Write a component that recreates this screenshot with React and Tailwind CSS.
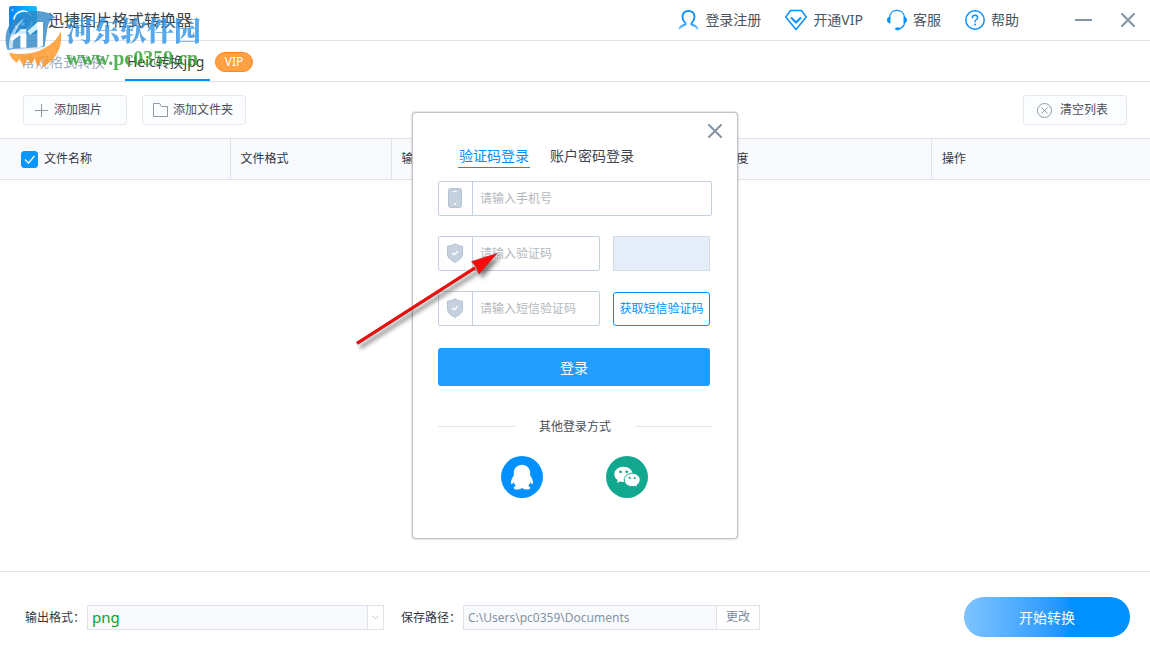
// App.jsx
import React, { useState } from 'react';

// --- Icons ---

const UserIcon = () => (
    <svg width="21" height="22" viewBox="0 0 22 22" fill="none" stroke="url(#userFade)" strokeWidth="2" strokeLinecap="round">
        <defs>
            <linearGradient id="userFade" x1="0" y1="0" x2="0" y2="22" gradientUnits="userSpaceOnUse">
                <stop offset="0.6" stopColor="#0a91ff" />
                <stop offset="1" stopColor="#9fd3ff" />
            </linearGradient>
        </defs>
        <path d="M1.5 20c1-2.2 3.2-3.2 5.8-4C8.3 15.6 8.3 14.8 7.5 14 5.5 12 4.7 10.2 4.7 7.5 4.7 4 7.3 1.5 11 1.5s6.3 2.5 6.3 6c0 2.7-.8 4.5-2.8 6.5-.8.8-.8 1.600.2 2 2.600.8 4.800 1.800 5.800 4" />
    </svg>
);

const DiamondIcon = () => (
    <svg width="22" height="22" viewBox="0 0 22 22" fill="none" stroke="#0a91ff" strokeLinejoin="round" strokeLinecap="round">
        <path strokeWidth="1.5" d="M5.5 1.5h11L21.2 8 11 20.5.8 8z" />
        <path strokeWidth="2" d="M6.5 9 11 13.500 15.500 9" />
    </svg>
);

const HeadsetIcon = () => (
    <svg width="20" height="22" viewBox="0 0 20 22" fill="none" stroke="#0a91ff" strokeLinecap="round">
        <path strokeWidth="1.2" d="M2.5 8C3 4 6 1.300 10 1.300S17 4 17.500 8M17.500 14.500c-.7 2.700-2.500 4.500-5.500 5.300" />
        <path fill="#0a91ff" stroke="none" d="M3.500 7.500v7C1.500 14.500 0 13 0 11s1.500-3.500 3.500-3.500zM16.500 7.500v7c2 0 3.500-1.500 3.500-3.500s-1.500-3.500-3.500-3.500z" />
        <ellipse cx="10.5" cy="19.800" rx="2.500" ry="1.500" fill="#0a91ff" stroke="none" />
    </svg>
);

const HelpIcon = () => (
    <svg width="20" height="20" viewBox="0 0 20 20" fill="none" stroke="#0a91ff" strokeWidth="1.5" strokeLinecap="round">
        <circle cx="10" cy="10" r="9.2" />
        <path d="M7.300 7.800C7.300 6.200 8.400 5.200 10 5.200s2.700 1 2.700 2.400C12.700 9.500 10 9.600 10 11.800" />
        <circle cx="10" cy="14.6" r="0.4" />
    </svg>
);

const CloseIcon = () => (
    <svg width="14" height="14" viewBox="0 0 14 14" stroke="#8494a3" strokeWidth="2" strokeLinecap="round">
        <path d="M1 1l12 12M13 1L1 13" />
    </svg>
);

const PhoneIcon = () => (
    <svg width="14" height="20" viewBox="0 0 14 20">
        <rect x="0.5" y="0.5" width="13" height="19" rx="2" fill="#c5d1df" stroke="#b3c2d2" />
        <path d="M5 3.5h4" stroke="#fff" />
        <circle cx="7" cy="16" r="1.1" fill="#fff" />
    </svg>
);

const ShieldIcon = () => (
    <svg width="16" height="20" viewBox="0 0 16 20" fill="none">
        <path d="M8 .7c2.300 1.500 4.800 2.300 7.500 2.500v8c0 3.500-3.200 6-7.500 8.200C3.700 17.200.5 14.700.5 11.200v-8C3.200 3 5.700 2.200 8 .7z" fill="#c5d1df" stroke="#b3c2d2" />
        <path d="M5.300 9.800l2 2 3.500-3.500" stroke="#fff" strokeWidth="1.3" />
    </svg>
);

const QQIcon = () => (
    <svg width="42" height="42" viewBox="0 0 42 42">
        <circle cx="21" cy="21" r="21" fill="#0090ff" />
        <path fill="#fff" d="M21 8.800c-5 0-8.200 3.600-8.200 8.200v2.500c-1.600 2.200-2.800 4.800-2.800 7 0 1.600.6 2 1.200 1.500l1.600-1.800c.3 1.500 1 2.800 2 3.900-1.300.5-2 1.100-2 1.800 0 1.200 2 1.700 4 1.600 1.800 0 3.200-.6 4.200-1.400 1 .8 2.400 1.400 4.200 1.400 2 .1 4-.4 4-1.600 0-.7-.7-1.300-2-1.800 1-1.100 1.700-2.400 2-3.900l1.600 1.800c.6.5 1.200.1 1.200-1.500 0-2.200-1.200-4.800-2.800-7V17c0-4.600-3.200-8.200-8.200-8.200z" />
    </svg>
);

const WechatIcon = () => (
    <svg width="42" height="42" viewBox="0 0 42 42">
        <circle cx="21" cy="21" r="21" fill="#12a78f" />
        <path fill="#fff" d="M17.500 10.800c-5 0-9.200 3.300-9.200 7.500 0 2.500 1.400 4.600 3.500 6l-.9 2.700 3.200-1.600c1.100.3 2.200.5 3.400.5 5 0 9.200-3.400 9.200-7.600s-4.200-7.500-9.200-7.500z" />
        <path fill="#fff" stroke="#12a78f" d="M26.200 17.200c-4.400 0-8 3-8 6.700s3.600 6.700 8 6.700c1 0 1.900-.1 2.700-.4l2.600 1.400-.7-2.300c2-1.200 3.400-3.200 3.400-5.400 0-3.700-3.600-6.700-8-6.700z" />
        <g fill="#12a78f">
            <circle cx="14.500" cy="15.800" r="1.400" />
            <circle cx="20.700" cy="15.800" r="1.400" />
            <circle cx="23.700" cy="22" r="1.100" />
            <circle cx="28.700" cy="22" r="1.100" />
        </g>
    </svg>
);

const AppLogo = () => (
    <svg width="28" height="28" viewBox="0 0 28 28" fill="none">
        <defs>
            <linearGradient id="logoFill" x1="0" y1="0" x2="28" y2="0" gradientUnits="userSpaceOnUse">
                <stop offset="0" stopColor="#0a86ff" />
                <stop offset="1" stopColor="#14bdfa" />
            </linearGradient>
        </defs>
        <rect width="28" height="28" rx="2" fill="url(#logoFill)" />
        <path d="M5 14a9 9 0 0 1 17-4M23 15a9 9 0 0 1-17 4" stroke="#fff" strokeWidth="1.6" />
        <circle cx="3.5" cy="4" r="0.8" fill="#fff" />
    </svg>
);

// --- Site watermark laid over the top left corner ---

const Watermark = () => (
    <div className="pointer-events-none absolute left-0 top-0 flex">
        <svg className="opacity-80" width="62" height="70" viewBox="0 0 186 210">
            <path fill="#2f86c6" d="M22 148C2 92 42 33 105 33c28 0 50 7 62 20-14 2-20 12-24 28l-10 62-28 6H22z" />
            <path fill="#fff" d="M30 116l33-28h16v55H61v-38l-25 18zM82 94l31-28h16v72l-17 5V88L90 104z" />
            <path fill="#fff" d="M27 146c-2-40 18-76 48-92-22 22-36 52-37 90z" opacity="0.7" />
            <path fill="#fff" d="M36 147l98-7 8-8-4 18H32z" opacity="0.8" />
            <path fill="#5cb4ec" d="M68 62l2.500 6 6.500.5-5 4 1.500 6.500-5.500-3.500-5.500 3.500 1.500-6.500-5-4 6.500-.5z" />
            <path fill="#ff9420" d="M27 158c42 8 78 3 106-13 24-13 42-30 49-51 8 46-14 88-56 108l4-28-18 26-8-26-10 22-12-20-10 24-14-22-8 10c-10-7-18-16-23-30z" />
        </svg>
        <div className="pl-1 pt-3 opacity-80">
            <p className="font-['Noto_Serif_CJK_SC','Noto_Sans_CJK_SC',sans-serif] text-[27px] font-black leading-9 text-[#2e94e8]">河东软件园</p>
            <p className="font-['Liberation_Serif',serif] text-xl font-bold leading-5 text-[#2ba02b]">www.pc0359.cn</p>
        </div>
    </div>
);

const headerLinks = [
    { label: '登录注册', Icon: UserIcon },
    { label: '开通VIP', Icon: DiamondIcon },
    { label: '客服', Icon: HeadsetIcon },
    { label: '帮助', Icon: HelpIcon },
];

const Header = () => (
    <header className="flex h-[41px] items-center border-b border-[#e0e2ea] pl-[9px] pr-[15px]">
        <AppLogo />
        <h1 className="ml-[11px] text-base text-[#3a3f49]">迅捷图片格式转换器</h1>
        <nav className="ml-auto flex items-center gap-6">
            {headerLinks.map(({ label, Icon }) => (
                <button key={label} type="button" className="flex items-center gap-1.5 text-sm text-[#4a5562]">
                    <Icon />
                    {label}
                </button>
            ))}
        </nav>
        <button type="button" aria-label="最小化" className="ml-14 h-0.5 w-[17px] bg-[#8494a3]" />
        <button type="button" aria-label="关闭" className="ml-[29px]"><CloseIcon /></button>
    </header>
);

const ModeTabs = () => (
    <div className="flex h-[41px] items-center border-b border-[#e0e2ea] pl-[21px]">
        <button type="button" className="pt-0.5 text-sm text-[#a3b1c3]">常规格式转换</button>
        <button type="button" className="ml-5 h-10 w-[85px] border-b-2 border-[#0090ff] px-0.5 pt-1 text-left text-sm text-[#3a3f49]">Heic转换jpg</button>
        <span className="ml-[5px] mt-0.5 h-5 w-[38px] rounded-full border border-[#ff8426] bg-[#ffa142] text-center text-xs leading-[18px] text-white">VIP</span>
    </div>
);

const toolButton = 'flex h-[30px] w-[104px] items-center rounded-[3px] border border-[#e6e8ef] bg-[#fcfdff] text-xs text-[#4a4f59]';

const Toolbar = () => (
    <div className="flex h-14 items-center gap-[15px] px-[23px]">
        <button type="button" className={`${toolButton} gap-1.5 pl-[11px]`}>
            <svg width="13" height="13" viewBox="0 0 13 13" stroke="#8c9aa8"><path d="M6.500 0v13M0 6.500h13" /></svg>
            添加图片
        </button>
        <button type="button" className={`${toolButton} gap-[5px] pl-2.5`}>
            <svg width="15" height="14" viewBox="0 0 15 14" fill="none" stroke="#8c9aa8"><path d="M.5 13.500V.5h6l2 3h6v10z" /></svg>
            添加文件夹
        </button>
        <button type="button" className={`${toolButton} ml-auto gap-2 pl-[13px]`}>
            <svg width="15" height="15" viewBox="0 0 15 15" fill="none" stroke="#8c9aa8"><circle cx="7.500" cy="7.500" r="7" /><path d="M4.500 4.500l6 6M10.500 4.500l-6 6" /></svg>
            清空列表
        </button>
    </div>
);

const FileTable = () => {
    const [allChecked, setAllChecked] = useState(true);
    const cell = 'border-r border-[#e0e2ea] pl-2.5';

    return (
        <table className="w-full table-fixed border-y border-[#e0e2ea] bg-[#f8fafd] text-left text-xs text-[#33363d]">
            <thead>
                <tr className="h-[41px] [&>th]:font-normal">
                    <th className="w-1/5 border-r border-[#e0e2ea] pl-[21px]">
                        <label className="flex items-center gap-1.5">
                            <span className="grid">
                                <input
                                    type="checkbox"
                                    checked={allChecked}
                                    onChange={(e) => setAllChecked(e.target.checked)}
                                    className="col-start-1 row-start-1 size-[17px] appearance-none rounded-[3px] border border-[#0a96ff] checked:bg-[#0a96ff]"
                                />
                                <svg className="pointer-events-none col-start-1 row-start-1" width="17" height="17" viewBox="0 0 17 17" fill="none" stroke="#fff" strokeWidth="1.2"><path d="M4 8.500l3.500 3.500 6-7" /></svg>
                            </span>
                            文件名称
                        </label>
                    </th>
                    <th className={`w-[14%] ${cell}`}>文件格式</th>
                    <th className={`w-[26%] ${cell}`}>输出格式</th>
                    <th className={`w-[21%] ${cell}`}>转换进度</th>
                    <th className="w-[19%] pl-2.5">操作</th>
                </tr>
            </thead>
        </table>
    );
};

const IconField = ({ id, label, Icon, className }) => (
    <div className={`flex h-[35px] rounded-xs border border-[#c5d0de] ${className}`}>
        <label htmlFor={id} aria-label={label} className="flex w-[34px] shrink-0 items-center justify-center border-r border-[#c5d0de] pr-px">
            <Icon />
        </label>
        <input id={id} placeholder={label} className="w-full min-w-0 px-[7px] pt-0.5 text-xs text-[#33363d] outline-none placeholder:text-[#b4b8be]" />
    </div>
);

const PointerArrow = () => (
    <svg className="pointer-events-none absolute -left-[63px] top-[132px] drop-shadow-[3px_4px_2px_rgba(0,0,0,0.5)]" width="155" height="110" viewBox="0 0 155 110">
        <path d="M7 98.500L125 23" stroke="#a8231b" strokeWidth="3.2" />
        <path d="M7 98L125 22.500" stroke="#fa0a0a" strokeWidth="2.4" />
        <path d="M147 8.500L121.500 16.500 126 22 129 29z" fill="#fa0a0a" stroke="#b3261e" strokeWidth="0.6" />
    </svg>
);

const LoginDialog = () => (
    <div className="absolute inset-0 grid place-items-center">
        <div role="dialog" aria-label="登录" className="relative w-[326px] rounded-sm border border-[#c3c3c3] bg-white px-[25px] pb-10 shadow-[0_0_2px_rgba(0,0,0,0.35)]">
            <div className="-mr-2.5 flex justify-end pt-[11px]">
                <button type="button" aria-label="关闭"><CloseIcon /></button>
            </div>
            <div className="mb-[13px] mt-1.5 flex gap-[18px] pl-5 text-sm">
                <button type="button" className="h-6 border-b border-[#0090ff] px-px leading-6 text-[#0090ff]">验证码登录</button>
                <button type="button" className="h-6 px-0.5 leading-6 text-[#3f4550]">账户密码登录</button>
            </div>
            <form className="flex flex-col gap-5" onSubmit={(e) => e.preventDefault()}>
                <IconField id="phone" label="请输入手机号" Icon={PhoneIcon} className="w-full" />
                <div className="flex gap-[13px] pr-0.5">
                    <IconField id="captcha" label="请输入验证码" Icon={ShieldIcon} className="flex-1" />
                    <div className="w-[97px] border border-[#d3dde8] bg-[#e5eef8]" />
                </div>
                <div className="flex gap-[13px] pr-0.5">
                    <IconField id="sms" label="请输入短信验证码" Icon={ShieldIcon} className="flex-1" />
                    <button type="button" className="mt-px w-[97px] rounded-[3px] border border-[#0090ff] text-xs text-[#0090ff]">获取短信验证码</button>
                </div>
                <button type="submit" className="mr-0.5 mt-0.5 h-[38px] rounded-[3px] bg-[#229dff] pt-0.5 text-sm text-white">登录</button>
            </form>
            <div className="mt-8 flex items-center gap-6 text-xs leading-[18px] text-[#4a4f59]">
                <hr className="flex-1 border-[#e6e6e6]" />
                其他登录方式
                <hr className="flex-1 border-[#e6e6e6]" />
            </div>
            <div className="mt-5 flex justify-center gap-[63px] pr-0.5">
                <button type="button" aria-label="QQ"><QQIcon /></button>
                <button type="button" aria-label="微信"><WechatIcon /></button>
            </div>
            <PointerArrow />
        </div>
    </div>
);

const Footer = () => (
    <footer className="flex items-center border-t border-[#e0e2ea] pb-[13px] pl-[25px] pr-5 pt-[25px] text-xs text-[#33363d]">
        <label htmlFor="format" className="w-[62px] pt-0.5">输出格式：</label>
        <div className="relative w-[297px]">
            <select id="format" defaultValue="png" className="block h-[25px] w-full appearance-none border border-[#e0e2ea] bg-[#f8fafd] px-1 text-[15px] leading-5 text-[#0aa51e] outline-none">
                <option value="png">png</option>
                <option value="jpg">jpg</option>
            </select>
            <span className="pointer-events-none absolute inset-y-px right-px flex w-4 items-center justify-center border-l border-[#e0e2ea] bg-white">
                <svg width="7" height="5" viewBox="0 0 7 5" fill="none" stroke="#c3ccd8"><path d="M.5.8l3 3 3-3" /></svg>
            </span>
        </div>
        <label htmlFor="savePath" className="ml-[17px] w-[62px] pt-0.5">保存路径：</label>
        <input id="savePath" readOnly value="C:\Users\pc0359\Documents" className="h-[25px] w-[254px] border border-[#e0e2ea] bg-[#f8fafd] px-1 text-xs text-[#8494a3] outline-none" />
        <button type="button" className="h-[25px] w-[43px] border border-l-0 border-[#e0e2ea] text-[#7c8c9c]">更改</button>
        <button type="button" className="ml-auto h-10 w-[166px] rounded-full bg-linear-to-r from-[#7cc4ff] to-[#0090ff] to-65% pt-0.5 text-sm text-white">开始转换</button>
    </footer>
);

const App = () => (
    <div className="relative flex min-h-screen flex-col bg-white font-['Noto_Sans','Noto_Sans_CJK_SC',sans-serif]">
        <Header />
        <ModeTabs />
        <Toolbar />
        <main className="flex-1">
            <FileTable />
        </main>
        <Footer />
        <Watermark />
        <LoginDialog />
    </div>
);

export default App;
